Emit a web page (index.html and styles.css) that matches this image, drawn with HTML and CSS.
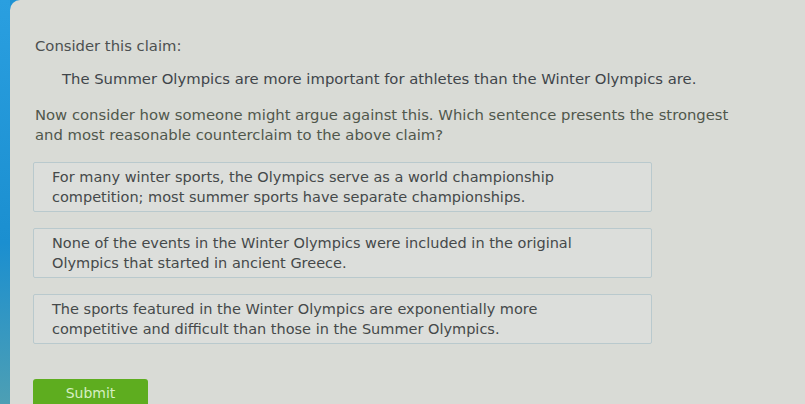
FILE: index.html
```html
<!DOCTYPE html>
<html lang="en">
<head>
  <meta charset="UTF-8">
  <meta name="viewport" content="width=device-width, initial-scale=1.0">
  <title>Counterclaim Question</title>
  <link rel="stylesheet" href="styles.css">
</head>
<body>
  <div class="page">
    <div class="side-strip"></div>

    <div class="panel">
      <p class="prompt">Consider this claim:</p>
      <p class="claim">The Summer Olympics are more important for athletes than the Winter Olympics are.</p>
      <p class="question">Now consider how someone might argue against this. Which sentence presents the strongest<br>and most reasonable counterclaim to the above claim?</p>

      <!-- Answer choices -->
      <div class="choices">
        <div class="choice">For many winter sports, the Olympics serve as a world championship<br>competition; most summer sports have separate championships.</div>
        <div class="choice">None of the events in the Winter Olympics were included in the original<br>Olympics that started in ancient Greece.</div>
        <div class="choice">The sports featured in the Winter Olympics are exponentially more<br>competitive and difficult than those in the Summer Olympics.</div>
      </div>

      <button class="submit">Submit</button>
    </div>
  </div>
</body>
</html>
```

FILE: styles.css
```css
* {
  margin: 0;
  padding: 0;
  box-sizing: border-box;
}

body {
  font-family: 'DejaVu Sans', Verdana, sans-serif;
  font-size: 14.8px;
  color: #45494a;
  background: #1d93d4;
  overflow: hidden;
}

.page {
  display: flex;
  height: 404px;
}

.side-strip {
  width: 10px;
  background: linear-gradient(180deg, #2a9fe0, #1b8fd0 60%, #4d9fb4);
}

.panel {
  flex: 1;
  background: #d9dbd6;
  border-top-left-radius: 10px;
  padding: 36px 0 0 23px;
}

p {
  line-height: 20px;
}

.prompt {
  margin-left: 2px;
  color: #4c5050;
}

.claim {
  margin: 13px 0 0 29px;
  color: #40454a;
}

.question {
  margin: 16px 0 0 2px;
  color: #50574c;
}

.choices {
  display: flex;
  flex-direction: column;
  gap: 16px;
  margin-top: 17px;
  width: 619px;
}

.choice {
  background: #dcdedb;
  border: 1px solid #b9c9cd;
  border-radius: 2px;
  padding: 4px 18px;
  height: 50px;
  font-size: 14.5px;
  line-height: 20px;
}

.submit {
  margin-top: 35px;
  width: 115px;
  height: 32px;
  background: #5ead1f;
  color: #d6efc2;
  border: none;
  border-radius: 3px 3px 0 0;
  font-family: 'DejaVu Sans', Verdana, sans-serif;
  font-size: 14px;
  padding-bottom: 4px;
  cursor: pointer;
}
```
